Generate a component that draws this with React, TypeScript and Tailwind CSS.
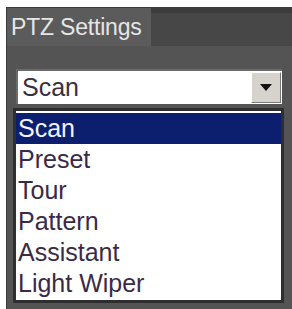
import React from "react";

export default function App() {
  const items = ["Scan", "Preset", "Tour", "Pattern", "Assistant", "Light Wiper"];
  return (
    <div
      className="w-[292px] h-[309px] bg-white pt-[7px] pl-[6px] flex overflow-hidden"
      style={{ fontFamily: '"Liberation Sans", Arial, sans-serif' }}
    >
      <div className="flex-1 flex flex-col bg-[#545454] border-t border-l border-[#3a3a3a]">
        <div className="flex h-[38px]">
          <div className="w-[144px] bg-[#5b5b5b] flex items-center pl-[4px] text-[23px] text-[#e6e6e6] tracking-[-0.2px]">
            PTZ Settings
          </div>
          <div className="flex-1 flex flex-col bg-[#4a4a4a]">
            <div className="h-[5px] bg-[#3c3c3c]" />
            <div className="flex-1 bg-[#474747]" />
          </div>
        </div>
        <div className="pl-[9px] pt-[23px]">
          <div className="w-[266px] h-[35px] bg-white border-t-2 border-l-2 border-[#6a6a6a] flex items-center">
            <div className="flex-1 pl-[4px] text-[25px] text-[#3a3040] leading-none">Scan</div>
            <div className="w-[30px] h-[31px] mr-[1px] bg-[#d6d3cc] border border-t-white border-l-white border-r-[#7a7a7a] border-b-[#7a7a7a] flex items-center justify-center">
              <svg width="12" height="7" viewBox="0 0 12 7">
                <path d="M0 0 H12 L6 7 Z" fill="#111" />
              </svg>
            </div>
          </div>
        </div>
        <div className="pl-[6px] pt-[4px]">
          <div className="w-[271px] border-[3px] border-[#2e2e2e] bg-white pt-[2px] pb-[1px]">
            {items.map((it, i) => (
              <div
                key={it}
                className={
                  "h-[31px] flex items-center pl-[2px] text-[25px] leading-none " +
                  (i === 0 ? "bg-[#0c1f6e] text-[#f2f2ff]" : "text-[#3a2a48]")
                }
              >
                {it}
              </div>
            ))}
          </div>
        </div>
      </div>
    </div>
  );
}
